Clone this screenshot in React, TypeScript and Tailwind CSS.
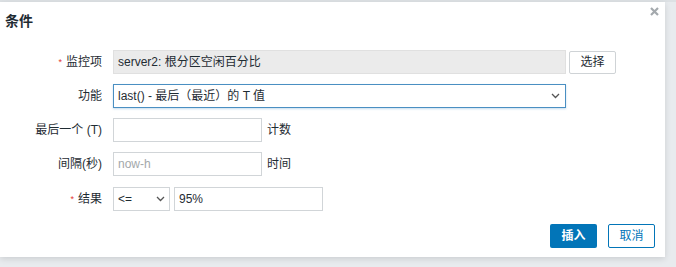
import React from "react";

const font = { fontFamily: '"Liberation Sans", Arial, "Noto Sans CJK SC", sans-serif' };

function Chevron() {
  return (
    <svg width="9" height="6" viewBox="0 0 9 6" className="shrink-0">
      <path d="M1 1l3.5 3.5L8 1" fill="none" stroke="#555" strokeWidth="1.3" />
    </svg>
  );
}

function Label({ text, required }: { text: string; required?: boolean }) {
  return (
    <div className="w-[103px] pr-[1px] flex items-center justify-end gap-[4px] text-[12px] text-[#1f2c33]">
      {required && <span className="text-[#e33734] text-[9px] leading-none">*</span>}
      <span>{text}</span>
    </div>
  );
}

export default function App() {
  return (
    <div className="w-[676px] h-[267px] bg-[#e8ebee] overflow-hidden" style={font}>
      <div className="h-[2px] bg-[#dde1e4]" />
      <div className="relative w-[665px] h-[255px] bg-white shadow-[0_2px_6px_rgba(0,0,0,0.12)]">
        <button className="absolute right-[5px] top-[4px] p-[1px]">
          <svg width="9" height="9" viewBox="0 0 9 9">
            <path d="M1 1l7 7M8 1l-7 7" stroke="#a4a9ad" strokeWidth="2.2" />
          </svg>
        </button>
        <h2 className="pl-[5px] pt-[10px] text-[14px] font-bold text-[#1f2c33] leading-[18px]">条件</h2>

        <div className="mt-[20px] flex flex-col gap-[10px]">
          <div className="flex items-center gap-[10px] h-[24px]">
            <Label text="监控项" required />
            <div className="w-[453px] h-[24px] bg-[#ebebeb] border border-[#e0e0e0] flex items-center px-[4px] text-[12px] text-[#1f2c33]">
              server2: 根分区空闲百分比
            </div>
            <button className="-ml-[7px] w-[47px] h-[23px] border border-[#cfd3d6] rounded-[2px] bg-white text-[12px] text-[#1f2c33]">
              选择
            </button>
          </div>

          <div className="flex items-center gap-[10px] h-[24px]">
            <Label text="功能" />
            <div className="w-[453px] h-[24px] border border-[#4a8fc2] shadow-[0_1px_2px_rgba(64,140,195,0.3)] flex items-center justify-between pl-[4px] pr-[5px] text-[12px] text-[#1f2c33]">
              <span>last() - 最后（最近）的 T 值</span>
              <Chevron />
            </div>
          </div>

          <div className="flex items-center gap-[10px] h-[24px]">
            <Label text="最后一个 (T)" />
            <div className="w-[149px] h-[24px] border border-[#d1d5d8]" />
            <span className="-ml-[5px] text-[12px] text-[#1f2c33]">计数</span>
          </div>

          <div className="flex items-center gap-[10px] h-[24px]">
            <Label text="间隔(秒)" />
            <div className="w-[149px] h-[24px] border border-[#d1d5d8] flex items-center px-[4px] text-[12px] text-[#a3a8ab]">
              now-h
            </div>
            <span className="-ml-[5px] text-[12px] text-[#1f2c33]">时间</span>
          </div>

          <div className="flex items-center gap-[10px] h-[24px] mt-[1px]">
            <Label text="结果" required />
            <div className="w-[57px] h-[24px] border border-[#d1d5d8] flex items-center justify-between pl-[4px] pr-[4px] text-[12px] text-[#1f2c33]">
              <span>&lt;=</span>
              <Chevron />
            </div>
            <div className="-ml-[6px] w-[149px] h-[24px] border border-[#d1d5d8] flex items-center px-[4px] text-[12px] text-[#1f2c33]">
              95%
            </div>
          </div>
        </div>

        <div className="mt-[13px] flex justify-end gap-[11px] pr-[10px]">
          <button className="w-[47px] h-[24px] rounded-[2px] bg-[#0275b8] text-white text-[12px] font-bold">插入</button>
          <button className="w-[47px] h-[24px] rounded-[2px] border border-[#0275b8] bg-white text-[#0275b8] text-[12px]">取消</button>
        </div>
      </div>
    </div>
  );
}
